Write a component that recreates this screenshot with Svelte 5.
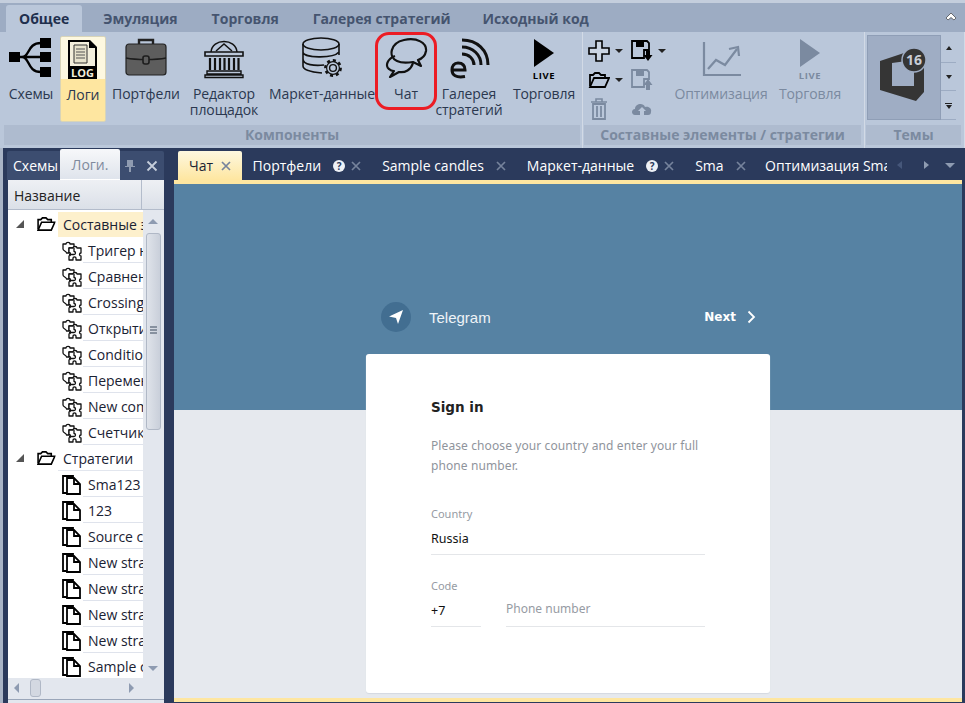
<script lang="ts">
  const ribbonTabs = ['Общее', 'Эмуляция', 'Торговля', 'Галерея стратегий', 'Исходный код'];
  const components = [
    { id: 'schemes', label: 'Схемы', width: 54, gap: 2 },
    { id: 'logs', label: 'Логи', width: 46, active: true },
    { id: 'portfolio', label: 'Портфели', width: 80 },
    { id: 'venues', label: 'Редактор площадок', width: 76 },
    { id: 'market', label: 'Маркет-данные', width: 120 },
    { id: 'chat', label: 'Чат', width: 48 },
    { id: 'gallery', label: 'Галерея стратегий', width: 78 },
    { id: 'live', label: 'Торговля', width: 72 }
  ];
  const composed = ['Тригер на', 'Сравнение', 'Crossing', 'Открытие', 'Condition', 'Переменная', 'New compo', 'Счетчик'];
  const strategies = ['Sma123', '123', 'Source code', 'New strategy', 'New strategy', 'New strategy', 'New strategy', 'Sample candles'];
  const docTabs = [
    { label: 'Портфели', help: true },
    { label: 'Sample candles', help: false },
    { label: 'Маркет-данные', help: true },
    { label: 'Sma', help: false }
  ];
</script>

{#snippet icon(name)}
  {#if name === 'schemes'}
    <svg width="44" height="44" viewBox="0 0 44 44">
      <rect x="0" y="15" width="11" height="10" fill="#000"/>
      <rect x="31" y="1" width="11" height="10" fill="#000"/>
      <rect x="31" y="15" width="11" height="10" fill="#000"/>
      <rect x="31" y="30" width="11" height="10" fill="#000"/>
      <path d="M10 20H32M13 20C21 20 18 6 32 6M13 20C21 20 18 35 32 35" fill="none" stroke="#000" stroke-width="2.4"/>
    </svg>
  {:else if name === 'logs'}
    <svg width="44" height="44" viewBox="0 0 44 44">
      <path d="M7 2H29L36 9V41H7Z" fill="#000"/>
      <path d="M9 4H28V10H34V28H9Z" fill="#f3efdc"/>
      <path d="M13 7H26V25H13Z" fill="#e6e2cc" stroke="#333" stroke-width="1"/>
      <path d="M15 11H24M15 14H24M15 17H24M15 20H24" stroke="#555" stroke-width="1.1"/>
      <text x="21.5" y="39" class="log-text" text-anchor="middle">LOG</text>
    </svg>
  {:else if name === 'portfolio'}
    <svg width="44" height="44" viewBox="0 0 44 44">
      <path d="M15 8V3H29V8" fill="none" stroke="#222" stroke-width="2.4"/>
      <rect x="2" y="7" width="40" height="31" rx="3" fill="#5d5d5d" stroke="#222" stroke-width="1.2"/>
      <path d="M2 21C12 23 32 23 42 21" fill="none" stroke="#1d1d1d" stroke-width="1.6"/>
      <rect x="19" y="19" width="6" height="8" rx="2" fill="#5d5d5d" stroke="#1d1d1d" stroke-width="1.6"/>
    </svg>
  {:else if name === 'venues'}
    <svg width="44" height="44" viewBox="0 0 44 44">
      <path d="M9 15C10 1 34 1 35 15" fill="none" stroke="#111" stroke-width="1.5"/>
      <path d="M14 14L22 7L30 14" fill="none" stroke="#111" stroke-width="1.5"/>
      <path d="M3 15H41V19H3Z" fill="#bbc7d9" stroke="#111" stroke-width="1.6"/>
      <path d="M8 21V33M13 21V33M18 21V33M22.500 21V33M27 21V33M32 21V33M36.500 21V33" stroke="#111" stroke-width="2.2"/>
      <path d="M5 34H39V37H5ZM3 38H41V40.500H3Z" fill="#bbc7d9" stroke="#111" stroke-width="1.4"/>
    </svg>
  {:else if name === 'market'}
    <svg width="54" height="44" viewBox="0 0 54 44">
      <ellipse cx="26" cy="7" rx="18" ry="6" fill="none" stroke="#111" stroke-width="1.6"/>
      <path d="M8 7V29C8 33 16 35 27 36M44 7V18M8 15C8 21 38 22 44 15M8 22C8 28 20 29 29 28" fill="none" stroke="#111" stroke-width="1.6"/>
      <g transform="translate(38 31)" fill="none" stroke="#111">
        <circle r="3.4" stroke-width="1.4"/>
        <circle r="7.6" stroke-width="2.6" stroke-dasharray="3 2.9"/>
        <circle r="6.400" stroke-width="1.2"/>
      </g>
    </svg>
  {:else if name === 'chat'}
    <svg width="44" height="44" viewBox="0 0 44 44">
      <path d="M13 24C4 20 6 6 20 3C33 0 43 6 42 14C41 20 37 22 34 23L37 29L29 25C23 26 17 26 13 24Z" fill="none" stroke="#111" stroke-width="2.2" stroke-linejoin="round"/>
      <path d="M11 19C3 22 1 29 5 32C6 33 8 34 10 34L6 40L15 35C21 36 27 33 29 26" fill="none" stroke="#111" stroke-width="2.2" stroke-linejoin="round"/>
    </svg>
  {:else if name === 'gallery'}
    <svg width="44" height="44" viewBox="0 0 44 44">
      <path d="M5 33H18C18 28 15 26 11 26C7 26 5 29 5 33C5 38 9 41 18 39.500" fill="none" stroke="#111" stroke-width="3"/>
      <path d="M15 3C30 3 41 13 41 28" fill="none" stroke="#111" stroke-width="3"/>
      <path d="M15 10C26 10 34 18 34 28" fill="none" stroke="#111" stroke-width="3"/>
      <path d="M15 17C22 17 27 22 27 28" fill="none" stroke="#111" stroke-width="3"/>
    </svg>
  {:else if name === 'live' || name === 'live-off'}
    <svg width="44" height="44" viewBox="0 0 44 44">
      <path d="M12 2L32 16L12 30Z" fill={name === 'live' ? '#000' : '#7b8aa0'}/>
      <text x="22" y="42" class="live-text" text-anchor="middle" fill={name === 'live' ? '#000' : '#7b8aa0'}>LIVE</text>
    </svg>
  {:else if name === 'optimize'}
    <svg width="44" height="44" viewBox="0 0 44 44">
      <path d="M5 5V38H42" fill="none" stroke="#7b8aa0" stroke-width="2.2"/>
      <path d="M9 32L17 23L26 28L38 12" fill="none" stroke="#7b8aa0" stroke-width="2.2"/>
      <path d="M30 12L39 10L40 19" fill="none" stroke="#7b8aa0" stroke-width="2.2"/>
    </svg>
  {:else if name === 'plus'}
    <svg width="22" height="22" viewBox="0 0 22 22">
      <path d="M8 1H14V8H21V14H14V21H8V14H1V8H8Z" fill="#fff" fill-opacity=".25" stroke="#000" stroke-width="1.6"/>
    </svg>
  {:else if name === 'open'}
    <svg width="22" height="22" viewBox="0 0 22 22">
      <path d="M2 17V6H5L7 4H11L13 6H17V9" fill="none" stroke="#000" stroke-width="1.8"/>
      <path d="M2 18L6 9H21L17 18Z" fill="none" stroke="#000" stroke-width="1.8"/>
    </svg>
  {:else if name === 'save'}
    <svg width="22" height="22" viewBox="0 0 22 22">
      <path d="M1 1H16L18 3V10H13V18H1Z" fill="none" stroke="#000" stroke-width="1.8"/>
      <rect x="5" y="1" width="8" height="6" fill="#000"/>
      <path d="M15 11H19V15H21.500L17 21L12.500 15H15Z" fill="#000"/>
    </svg>
  {:else if name === 'save-up'}
    <svg width="22" height="22" viewBox="0 0 22 22">
      <path d="M1 1H16L18 3V10H13V18H1Z" fill="none" stroke="#7b8aa0" stroke-width="1.8"/>
      <rect x="5" y="1" width="8" height="6" fill="#7b8aa0"/>
      <path d="M15 21H19V16H21.500L17 10L12.500 16H15Z" fill="#7b8aa0"/>
    </svg>
  {:else if name === 'trash'}
    <svg width="22" height="22" viewBox="0 0 22 22">
      <path d="M3 4H19M8 4V1H14V4" fill="none" stroke="#7b8aa0" stroke-width="1.6"/>
      <path d="M5 6H17V21H5Z" fill="none" stroke="#7b8aa0" stroke-width="1.8"/>
      <path d="M9 8V19M13 8V19" stroke="#7b8aa0" stroke-width="1.8"/>
    </svg>
  {:else if name === 'cloud'}
    <svg width="22" height="22" viewBox="0 0 22 22">
      <path d="M4 17C0 17 0 11 4 11C4 6 12 4 14 9C18 8 21 11 20 14C20 16 19 17 17 17H13V13H15L11 9L7 13H9V17Z" fill="#7b8aa0"/>
    </svg>
  {/if}
{/snippet}

{#snippet closeIcon()}
  <svg class="close" width="10" height="10" viewBox="0 0 10 10"><path d="M1 1L9 9M9 1L1 9" stroke="#76839c" stroke-width="1.7"/></svg>
{/snippet}

{#snippet helpIcon()}
  <span class="help">?</span>
{/snippet}

{#snippet collapse()}
  <svg class="tri" width="10" height="10" viewBox="0 0 10 10"><path d="M9 1V9H1Z" fill="#555"/></svg>
{/snippet}

{#snippet puzzle()}
  <svg width="20" height="20" viewBox="0 0 20 20" fill="#fff" stroke="#111" stroke-width="1.3" stroke-linejoin="round">
    <path d="M1 3H4C4 .8 8 .8 8 3H12V7H7V12H4.500C4.500 10 1 10 1 8Z"/>
    <path d="M7 7H11C11 5 15 5 15 7H19V12C17 12 17 15 19 15V19H14V17C14 15.500 11 15.500 11 17V19H7V15C9 15 9 11.500 7 11.500Z"/>
    <path d="M12 7V10.500C14 10.500 14 13.500 12 13.500H7" fill="none"/>
  </svg>
{/snippet}

{#snippet page()}
  <svg width="19" height="20" viewBox="0 0 19 20" fill="#fff" stroke="#000" stroke-width="1.8">
    <path d="M1 1H11V18H1Z"/>
    <path d="M5 3H12L18 9V19H5Z"/>
    <path d="M12 3V9H18" fill="none"/>
  </svg>
{/snippet}

<div class="window">
  <header class="ribbon">
    <nav class="ribbon-tabs">
      {#each ribbonTabs as tab, i}
        <span class="ribbon-tab" class:current={i === 0}>{tab}</span>
      {/each}
      <svg class="minimize" width="12" height="10" viewBox="0 0 12 10"><path d="M1 6L6 1L11 6L9 8L6 5.500L3 8Z" fill="#fff" stroke="#222" stroke-width=".6"/></svg>
    </nav>
    <div class="groups">
      <section class="group first">
        <div class="tools">
          {#each components as item}
            <div class="tool" class:active={item.active} style="width: {item.width}px; margin-right: {item.gap ?? 0}px">
              <div class="tool-icon">{@render icon(item.id)}</div>
              <span class="tool-label">{item.label}</span>
            </div>
          {/each}
        </div>
        <div class="group-title">Компоненты</div>
      </section>
      <section class="group second">
        <div class="tools">
          <div class="small-grid">
            <span class="small">{@render icon('plus')}<i class="caret"></i></span>
            <span class="small">{@render icon('save')}<i class="caret"></i></span>
            <span class="small">{@render icon('open')}<i class="caret"></i></span>
            <span class="small">{@render icon('save-up')}</span>
            <span class="small">{@render icon('trash')}</span>
            <span class="small">{@render icon('cloud')}</span>
          </div>
          <div class="tool disabled opt">
            <div class="tool-icon">{@render icon('optimize')}</div>
            <span class="tool-label">Оптимизация</span>
          </div>
          <div class="tool disabled live">
            <div class="tool-icon">{@render icon('live-off')}</div>
            <span class="tool-label">Торговля</span>
          </div>
        </div>
        <div class="group-title">Составные элементы / стратегии</div>
      </section>
      <section class="group third">
        <div class="themes">
          <div class="theme-item">
            <svg width="56" height="60" viewBox="0 0 56 60">
              <path fill-rule="evenodd" d="M4 13L28 5L48 12V44L40 53L4 42ZM16 15V38L38 38V12Z" fill="#353535"/>
              <circle cx="38" cy="12" r="12" fill="#353535" stroke="#9fadc4" stroke-width="1.5"/>
              <text x="38" y="17" class="theme-num" text-anchor="middle">16</text>
            </svg>
          </div>
          <div class="theme-arrows">
            <span class="theme-btn"><i class="up"></i></span>
            <span class="theme-btn"><i class="down"></i></span>
            <span class="theme-btn more"><i class="down"></i></span>
          </div>
        </div>
        <div class="group-title">Темы</div>
      </section>
    </div>
  </header>

  <!-- red annotation drawn on top of the ribbon -->
  <div class="highlight"></div>

  <div class="workspace">
    <aside class="side">
      <div class="side-head">
        <span class="side-name">Схемы</span>
        <span class="side-tab">Логи.</span>
        <svg class="pin" width="12" height="13" viewBox="0 0 12 13"><path d="M3 1H9V7H11V8H7V13H5V8H1V7H3Z" fill="#8f9bb0"/></svg>
        <svg width="12" height="12" viewBox="0 0 12 12"><path d="M1.500 1.500L10.500 10.500M10.500 1.500L1.500 10.500" stroke="#c6cedb" stroke-width="1.8"/></svg>
      </div>
      <div class="side-body">
        <div class="column-head">
          <span class="column-name">Название</span>
          <span class="column-rest"></span>
        </div>
        <div class="tree-wrap">
          <div class="tree">
            <div class="group-row">
              {@render collapse()}
              <span class="folder">{@render icon('open')}</span>
              <span class="group-name selected">Составные элементы</span>
            </div>
            {#each composed as row}
              <div class="row">
                <span class="row-icon">{@render puzzle()}</span>
                <span class="row-name">{row}</span>
              </div>
            {/each}
            <div class="group-row">
              {@render collapse()}
              <span class="folder">{@render icon('open')}</span>
              <span class="group-name">Стратегии</span>
            </div>
            {#each strategies as row}
              <div class="row">
                <span class="row-icon">{@render page()}</span>
                <span class="row-name">{row}</span>
              </div>
            {/each}
          </div>
          <div class="vscroll">
            <i class="up"></i>
            <div class="vthumb"><b></b></div>
            <i class="down"></i>
          </div>
        </div>
        <div class="hscroll">
          <i class="left"></i>
          <div class="hthumb"></div>
          <i class="right"></i>
        </div>
      </div>
    </aside>

    <main class="docs">
      <div class="doc-tabs">
        <div class="doc-tab current">
          <span>Чат</span>
          {@render closeIcon()}
        </div>
        {#each docTabs as tab}
          <div class="doc-tab">
            <span>{tab.label}</span>
            {#if tab.help}{@render helpIcon()}{/if}
            {@render closeIcon()}
          </div>
        {/each}
        <div class="doc-tab clipped"><span>Оптимизация Sma123</span></div>
        <div class="doc-nav">
          <i class="left"></i>
          <i class="right"></i>
          <i class="down"></i>
        </div>
      </div>
      <div class="doc-page">
        <div class="tg-top">
          <div class="tg-bar">
            <span class="tg-logo">
              <svg width="16" height="16" viewBox="0 0 16 16"><path d="M1 7.500L15 1L10 15L8 9Z" fill="#fff"/></svg>
            </span>
            <span class="tg-name">Telegram</span>
            <span class="tg-next">Next</span>
            <svg class="tg-chevron" width="9" height="14" viewBox="0 0 9 14"><path d="M1.500 1.500L7 7L1.500 12.500" fill="none" stroke="#fff" stroke-width="1.8"/></svg>
          </div>
        </div>
        <div class="card">
          <h1>Sign in</h1>
          <p>Please choose your country and enter your full phone number.</p>
          <div class="field">
            <label for="country">Country</label>
            <div class="value" id="country">Russia</div>
          </div>
          <div class="phone">
            <div class="field code">
              <label for="code">Code</label>
              <div class="value" id="code">+7</div>
            </div>
            <div class="field number">
              <div class="value placeholder">Phone number</div>
            </div>
          </div>
        </div>
      </div>
    </main>
  </div>
</div>

<style>
  :global(body) {
    margin: 0;
    background: #2b3a5c;
  }
  .window {
    position: relative;
    width: 965px;
    height: 703px;
    overflow: hidden;
    display: flex;
    flex-direction: column;
    background: #2b3a5c;
    font-family: "Open Sans", "Noto Sans", sans-serif;
    font-size: 14px;
    color: #2b384f;
  }
  .ribbon {
    height: 148px;
    flex: none;
    box-sizing: border-box;
    padding-top: 3px;
    background: #c4cedd;
    display: flex;
    flex-direction: column;
  }
  .ribbon-tabs {
    height: 29px;
    flex: none;
    display: flex;
    align-items: flex-end;
    position: relative;
    padding-left: 6px;
    background: #9dacc3;
  }
  .ribbon-tab {
    height: 27px;
    line-height: 28px;
    padding: 0 17px;
    font-weight: 700;
    font-size: 14px;
    color: #45546f;
  }
  .ribbon-tab:nth-child(4) {
    padding-right: 15px;
  }
  .ribbon-tab.current {
    padding: 0 13px;
    margin-right: 4px;
    color: #1f2f4d;
    background: #bac7da;
    border-radius: 3px 3px 0 0;
  }
  .minimize {
    position: absolute;
    right: 8px;
    top: 9px;
  }
  .groups {
    flex: 1;
    display: flex;
    background: #bac7da;
  }
  .group {
    display: flex;
    flex-direction: column;
    box-sizing: border-box;
    border-right: 1px solid #d2dae6;
  }
  .group.first {
    width: 583px;
    padding: 0 2px 0 4px;
  }
  .group.second {
    width: 282px;
    padding: 0 3px 0 1px;
  }
  .group.third {
    width: 100px;
    padding: 0 3px 0 1px;
  }
  .tools {
    height: 93px;
    flex: none;
    display: flex;
    padding-top: 4px;
    box-sizing: border-box;
  }
  .tool {
    height: 86px;
    box-sizing: border-box;
    display: flex;
    flex-direction: column;
    align-items: center;
    text-align: center;
    flex: none;
  }
  .tool.active {
    background: linear-gradient(#fdf8e0 0, #fdf8e0 50%, #fee6a0 50%, #fee6a0 100%);
    border: 1px solid #d8d4b8;
    border-radius: 2px;
  }
  .tool-icon {
    height: 44px;
    margin-top: 1px;
    display: flex;
    justify-content: center;
    flex: none;
  }
  .tool-label {
    margin-top: 5px;
    line-height: 16px;
    font-size: 14px;
    letter-spacing: -0.1px;
  }
  .tool.disabled {
    color: #7b8aa0;
  }
  .tool.opt {
    width: 94px;
  }
  .tool.live {
    width: 84px;
  }
  .log-text {
    font: 700 11px "Open Sans", sans-serif;
    fill: #f3efdc;
  }
  .live-text {
    font: 700 9.5px "Open Sans", sans-serif;
    letter-spacing: 0.6px;
  }
  .theme-num {
    font: 700 14px "Open Sans", sans-serif;
    fill: #c8cdd6;
  }
  .small-grid {
    width: 90px;
    height: 87px;
    flex: none;
    display: grid;
    grid-template-columns: 43px 43px;
    grid-template-rows: 29px 29px 29px;
    padding-left: 4px;
    box-sizing: border-box;
  }
  .small {
    display: flex;
    align-items: center;
    gap: 5px;
  }
  .caret {
    width: 0;
    height: 0;
    border: 4px solid transparent;
    border-top: 4px solid #222;
    border-bottom: 0;
  }
  .group-title {
    height: 20px;
    flex: none;
    background: #aebbcf;
    text-align: center;
    font-weight: 700;
    font-size: 14px;
    line-height: 20px;
    color: #7b8aa0;
  }
  .themes {
    height: 93px;
    flex: none;
    display: flex;
    padding: 3px 0 5px 1px;
    box-sizing: border-box;
  }
  .theme-item {
    width: 74px;
    height: 85px;
    background: #9fadc4;
    border: 1px solid #8f9eb6;
    box-sizing: border-box;
    display: flex;
    align-items: center;
    justify-content: center;
  }
  .theme-arrows {
    display: flex;
    flex-direction: column;
    width: 15px;
    gap: 1px;
  }
  .theme-btn {
    flex: 1;
    background: #bac7da;
    border-bottom: 1px solid #9dacc3;
    display: flex;
    flex-direction: column;
    gap: 1px;
    align-items: center;
    justify-content: center;
  }
  .theme-btn i {
    display: block;
    width: 0;
    height: 0;
    border-left: 3.5px solid transparent;
    border-right: 3.5px solid transparent;
  }
  .theme-btn .up {
    border-bottom: 4px solid #222;
  }
  .theme-btn .down {
    border-top: 4px solid #222;
  }
  .theme-btn.more::before {
    content: '';
    width: 7px;
    height: 1px;
    background: #222;
  }
  .highlight {
    position: absolute;
    left: 375px;
    top: 32px;
    width: 56px;
    height: 72px;
    border: 3px solid #ec1c24;
    border-radius: 14px;
  }
  .workspace {
    flex: 1;
    min-height: 0;
    display: flex;
    border-left: 3px solid #a9b4c6;
    padding-top: 3px;
    position: relative;
  }
  .side {
    width: 161px;
    flex: none;
    display: flex;
    flex-direction: column;
  }
  .side-head {
    height: 29px;
    flex: none;
    display: flex;
    align-items: center;
    position: relative;
    background: #3c4d70;
    border-radius: 2px 2px 0 0;
    margin-left: 4px;
    color: #fff;
  }
  .side-name {
    margin-left: 6px;
    width: 47px;
    overflow: hidden;
    white-space: nowrap;
  }
  .side-tab {
    width: 60px;
    height: 31px;
    margin-top: -3px;
    line-height: 32px;
    text-align: center;
    background: linear-gradient(#f7f8fa, #dfe4ec);
    border-bottom: 1px solid #fff;
    box-sizing: border-box;
    color: #7f8a9d;
    border-radius: 2px 2px 0 0;
  }
  .pin {
    margin-left: 4px;
    margin-right: 10px;
  }
  .side-body {
    flex: 1;
    min-height: 0;
    display: flex;
    flex-direction: column;
    margin-left: 5px;
    background: #e3e7ee;
  }
  .column-head {
    height: 30px;
    flex: none;
    display: flex;
    background: linear-gradient(#eef0f4, #dbe0e8);
    border-bottom: 1px solid #b3bccb;
    box-sizing: border-box;
    color: #222;
  }
  .column-name {
    width: 134px;
    box-sizing: border-box;
    padding-left: 6px;
    line-height: 31px;
    border-right: 1px solid #b3bccb;
  }
  .tree-wrap {
    height: 468px;
    flex: none;
    display: flex;
    overflow: hidden;
  }
  .tree {
    width: 135px;
    flex: none;
    overflow: hidden;
    background: #fff;
    padding-top: 1px;
  }
  .group-row,
  .row {
    height: 26px;
    display: flex;
    align-items: center;
    white-space: nowrap;
    color: #1a2233;
  }
  .tri {
    margin-left: 7px;
    flex: none;
  }
  .folder {
    margin-left: 10px;
    width: 22px;
    height: 22px;
    flex: none;
    transform: scale(0.88);
  }
  .group-name {
    margin-left: 1px;
    padding: 0 5px;
    height: 25px;
    line-height: 27px;
    flex: 1;
    overflow: hidden;
    border-bottom: 1px solid #e2e6ee;
  }
  .group-name.selected {
    background: #fdf0cc;
    line-height: 25px;
    border-bottom: 0;
  }
  .row-icon {
    margin-left: 54px;
    width: 20px;
    height: 20px;
    flex: none;
    margin-top: 1px;
  }
  .row-name {
    margin-left: 1px;
    padding-left: 5px;
    flex: 1;
    min-width: 0;
    height: 25px;
    line-height: 27px;
    overflow: hidden;
    border-bottom: 1px solid #dfe3ec;
  }
  .vscroll {
    flex: 1;
    position: relative;
  }
  .vscroll .up,
  .vscroll .down,
  .hscroll .left,
  .hscroll .right {
    position: absolute;
    width: 0;
    height: 0;
  }
  .vscroll .up {
    left: 5px;
    top: 9px;
    border: 5px solid transparent;
    border-top: 0;
    border-bottom: 5px solid #8e9bb1;
  }
  .vscroll .down {
    left: 5px;
    bottom: 7px;
    border: 5px solid transparent;
    border-bottom: 0;
    border-top: 5px solid #8e9bb1;
  }
  .vthumb {
    position: absolute;
    left: 3px;
    top: 23px;
    width: 15px;
    height: 197px;
    box-sizing: border-box;
    background: linear-gradient(90deg, #dfe3ea, #c9cfda);
    border: 1px solid #b0b8c6;
    border-radius: 3px;
  }
  .vthumb b {
    position: absolute;
    left: 3px;
    top: 92px;
    width: 7px;
    height: 2px;
    background: #87919f;
    box-shadow: 0 3px 0 #87919f, 0 6px 0 #87919f;
  }
  .hscroll {
    height: 21px;
    flex: none;
    position: relative;
    background: #e3e7ee;
    border-bottom: 1px solid #9aa6b9;
  }
  .hscroll .left {
    left: 6px;
    top: 5px;
    border: 5px solid transparent;
    border-left: 0;
    border-right: 5px solid #8e9bb1;
  }
  .hscroll .right {
    left: 121px;
    top: 5px;
    border: 5px solid transparent;
    border-right: 0;
    border-left: 5px solid #8e9bb1;
  }
  .hthumb {
    position: absolute;
    left: 22px;
    top: 1px;
    width: 9px;
    height: 16px;
    background: #d3d8e1;
    border: 1px solid #b0b8c6;
    border-radius: 3px;
  }
  .docs {
    width: 788px;
    flex: none;
    margin-left: 10px;
    display: flex;
    flex-direction: column;
    min-height: 0;
  }
  .doc-tabs {
    height: 29px;
    flex: none;
    display: flex;
    align-items: stretch;
    padding-left: 4px;
    color: #fff;
    white-space: nowrap;
    position: relative;
  }
  .doc-tab {
    display: flex;
    align-items: center;
    padding: 0 10.5px;
    gap: 12px;
  }
  .doc-tab.current {
    padding: 0 11px;
    gap: 8px;
    color: #1a2233;
    background: linear-gradient(#fdf8e0, #fee6a0);
    border-radius: 2px 2px 0 0;
  }
  .doc-tab.clipped {
    flex: none;
    width: 122px;
    padding: 0;
    margin-left: 9px;
    overflow: hidden;
  }
  .close {
    flex: none;
  }
  .help {
    width: 12px;
    height: 12px;
    flex: none;
    margin-right: -6px;
    border-radius: 50%;
    background: #eef1f6;
    color: #2b3a5c;
    font: 700 10px/12px "Open Sans", sans-serif;
    text-align: center;
  }
  .doc-nav {
    position: absolute;
    right: 0;
    top: 0;
    width: 76px;
    height: 29px;
  }
  .doc-nav i {
    position: absolute;
    width: 0;
    height: 0;
    top: 10px;
  }
  .doc-nav .left {
    left: 11px;
    border: 4px solid transparent;
    border-left: 0;
    border-right: 5px solid #46577a;
  }
  .doc-nav .right {
    left: 38px;
    border: 4px solid transparent;
    border-right: 0;
    border-left: 5px solid #8e9bb1;
  }
  .doc-nav .down {
    left: 59px;
    top: 12px;
    border: 5px solid transparent;
    border-bottom: 0;
    border-top: 5px solid #8e9bb1;
  }
  .doc-page {
    flex: none;
    height: 522px;
    box-sizing: border-box;
    border-top: 4px solid #fee6a0;
    border-bottom: 4px solid #fee6a0;
    background: #e6e9ee;
    font-family: "Noto Sans", "Open Sans", sans-serif;
    font-size: 12px;
  }
  .tg-top {
    height: 226px;
    box-sizing: border-box;
    background: #5682a3;
    padding: 118px 206px 0 207px;
  }
  .tg-bar {
    display: flex;
    align-items: center;
    height: 30px;
    color: #fff;
  }
  .tg-logo {
    width: 30px;
    height: 30px;
    border-radius: 50%;
    background: #426e91;
    display: flex;
    align-items: center;
    justify-content: center;
  }
  .tg-name {
    margin-left: 18px;
    font: 15px "Liberation Sans", sans-serif;
    color: #eef3f7;
    flex: 1;
  }
  .tg-next {
    font: 700 12px "DejaVu Sans", sans-serif;
    margin-top: -1px;
  }
  .tg-chevron {
    margin-left: 11px;
    margin-top: -1px;
  }
  .card {
    width: 404px;
    height: 339px;
    box-sizing: border-box;
    margin: -56px 0 0 192px;
    padding: 43px 65px 0;
    background: #fff;
    border-radius: 3px;
    box-shadow: 0 1px 1px #d4d9e0;
  }
  h1 {
    margin: 0;
    font: 700 13.5px/20px "DejaVu Sans", sans-serif;
    color: #222;
  }
  p {
    margin: 19px 0 0;
    line-height: 20px;
    color: #8f949c;
    font-size: 12px;
    letter-spacing: 0.1px;
  }
  .field {
    display: flex;
    flex-direction: column;
  }
  .card > .field {
    margin-top: 30px;
  }
  label {
    line-height: 16px;
    font-size: 11px;
    color: #969ba3;
  }
  .value {
    height: 31px;
    line-height: 32px;
    color: #111;
    border-bottom: 1px solid #e4e6e9;
    margin-top: 1px;
    font-size: 12.5px;
  }
  .value.placeholder {
    color: #969ba3;
    line-height: 27px;
    font-size: 12px;
  }
  .phone {
    display: flex;
    gap: 25px;
    margin-top: 23px;
  }
  .field.code {
    width: 50px;
  }
  .field.number {
    flex: 1;
    justify-content: flex-end;
  }
</style>
